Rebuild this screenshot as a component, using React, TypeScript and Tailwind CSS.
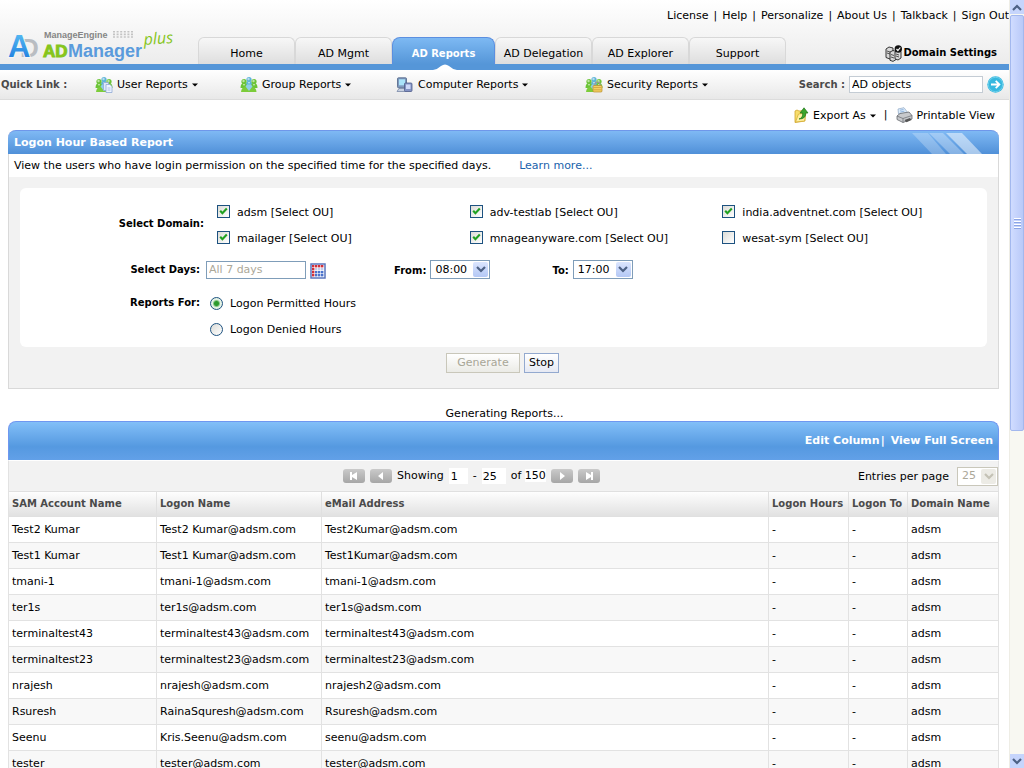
import { useId, useState, type ReactNode } from "react";

/* ── Data ── */

const topLinks = ["License", "Help", "Personalize", "About Us", "Talkback", "Sign Out"];
const tabs = ["Home", "AD Mgmt", "AD Reports", "AD Delegation", "AD Explorer", "Support"];

const domains = [
  { name: "adsm", checked: true },
  { name: "adv-testlab", checked: true },
  { name: "india.adventnet.com", checked: true },
  { name: "mailager", checked: true },
  { name: "mnageanyware.com", checked: true },
  { name: "wesat-sym", checked: false },
];

const columns = [
  { label: "SAM Account Name", width: "w-[148px]" },
  { label: "Logon Name", width: "w-[165px]" },
  { label: "eMail Address", width: "" },
  { label: "Logon Hours", width: "w-[80px]" },
  { label: "Logon To", width: "w-[59px]" },
  { label: "Domain Name", width: "w-[91px]" },
];

const rows = [
  ["Test2 Kumar", "Test2 Kumar@adsm.com", "Test2Kumar@adsm.com"],
  ["Test1 Kumar", "Test1 Kumar@adsm.com", "Test1Kumar@adsm.com"],
  ["tmani-1", "tmani-1@adsm.com", "tmani-1@adsm.com"],
  ["ter1s", "ter1s@adsm.com", "ter1s@adsm.com"],
  ["terminaltest43", "terminaltest43@adsm.com", "terminaltest43@adsm.com"],
  ["terminaltest23", "terminaltest23@adsm.com", "terminaltest23@adsm.com"],
  ["nrajesh", "nrajesh@adsm.com", "nrajesh2@adsm.com"],
  ["Rsuresh", "RainaSquresh@adsm.com", "Rsuresh@adsm.com"],
  ["Seenu", "Kris.Seenu@adsm.com", "seenu@adsm.com"],
  ["tester", "tester@adsm.com", "tester@adsm.com"],
];

/* ── Icons ── */

function Person({ x, y, color }: { x: number; y: number; color: string }) {
  return (
    <g transform={`translate(${x} ${y})`}>
      <path d="M0 9 Q0 4 3.5 4 Q7 4 7 9 Z" fill={color} />
      <path d="M2.5 4.5 L3.5 7 L4.5 4.5Z" fill="#fff" />
      <circle cx="3.5" cy="2.6" r="2.6" fill={color} />
      <circle cx="3" cy="2" r="1.2" fill="#fff" opacity="0.55" />
    </g>
  );
}

function UsersIcon({ children }: { children?: ReactNode }) {
  return (
    <svg width="18" height="16" viewBox="0 0 18 16" aria-hidden="true">
      <Person x={5.5} y={0} color="#5fb4d8" />
      <Person x={0.5} y={2} color="#6cc437" />
      <Person x={10.5} y={2} color="#6cc437" />
      <path d="M1 15 Q1.5 10 5.5 10 Q8 10 9 12 Q10 10 12.5 10 Q16 10 16.5 15Z" fill="#7ccc3a" />
      <path d="M5.5 9.5 L9 14 L12.5 9.5 L11 7.5 H7Z" fill="#8fcde8" />
      {children}
    </svg>
  );
}

function UserDocIcon() {
  return (
    <UsersIcon>
      <path d="M8.5 5.5 h5 v8 h-5z" fill="#dfe9fa" stroke="#8fa9d6" strokeWidth="0.8" />
      <path d="M11 7.5 h4 l2 2 v6 h-6z" fill="#eef4ff" stroke="#8fa9d6" strokeWidth="0.8" />
      <path d="M12.5 11 h3 M12.5 13 h3" stroke="#9db6e2" strokeWidth="0.8" />
    </UsersIcon>
  );
}

function SecurityIcon() {
  return (
    <UsersIcon>
      <path d="M10 9 V7.5 a2.5 2.5 0 0 1 5 0 V9" fill="none" stroke="#9a9a9a" strokeWidth="1.2" />
      <rect x="8" y="8.5" width="9" height="6.5" rx="1" fill="#f3cf63" stroke="#b98b2c" strokeWidth="0.7" />
      <path d="M8.5 10.5 h8 M8.5 12.8 h8" stroke="#c99a36" strokeWidth="0.7" />
    </UsersIcon>
  );
}

function ComputerIcon() {
  return (
    <svg width="18" height="16" viewBox="0 0 18 16" aria-hidden="true">
      <rect x="1.5" y="0.8" width="9" height="10" rx="1" fill="#7f98bd" stroke="#4d6387" strokeWidth="0.8" />
      <rect x="3" y="2.3" width="6" height="6" fill="#a9e3fa" />
      <path d="M1 14.5 L3 11.5 H10 V14.5Z" fill="#c9d2e2" stroke="#6b7d9f" strokeWidth="0.7" />
      <rect x="8.5" y="6" width="7.5" height="8.5" rx="1" fill="#8493c4" stroke="#4c5a88" strokeWidth="0.8" />
      <rect x="10" y="7.5" width="4.5" height="4.5" fill="#cdd8f8" />
    </svg>
  );
}

function ServerIcon() {
  return (
    <svg width="18" height="17" viewBox="0 0 18 17" aria-hidden="true">
      <g fill="#d8d8d8" stroke="#222" strokeWidth="0.9">
        <path d="M1 4 L4 2 L8 3 V12 L5 14 L1 12.5Z" />
        <path d="M5 7 L8 5.5 L11 6.5 V14.5 L8 16.4 L5 15.3Z" />
        <path d="M10 7 L13 5.5 L16 6.5 V13 L13 15 L10 13.8Z" />
      </g>
      <path d="M2 6 l3 1 M2 8 l3 1 M6 9.5 l3 1 M6 12 l3 1 M11 9 l3 1 M11 11 l3 1" stroke="#333" strokeWidth="0.8" />
      <circle cx="13.3" cy="4" r="3.7" fill="#111" />
      <path d="M11.5 4 l1.4 1.5 l2.4 -3" fill="none" stroke="#fff" strokeWidth="1.2" />
    </svg>
  );
}

function ExportIcon() {
  return (
    <svg width="15" height="16" viewBox="0 0 15 16" aria-hidden="true">
      <path d="M1 4 L3 3 L5 4 L11 3.5 V14 L1 15.5Z" fill="#f7dd6c" stroke="#cfa52c" strokeWidth="0.8" />
      <path d="M1.5 15 L4.5 7 L12 6 L10.5 14Z" fill="#fff0a2" stroke="#d3a92c" strokeWidth="0.7" />
      <path d="M5 12 Q9 11 8.7 6 L6 6 L10 0.8 L14 6 L11.7 6 Q12 12 5 12Z" fill="#3da62e" stroke="#1f7518" strokeWidth="0.7" />
    </svg>
  );
}

function PrinterIcon() {
  return (
    <svg width="17" height="17" viewBox="0 0 17 17" aria-hidden="true">
      <path d="M2.5 7 L2 2 L8 0.7 L12 6Z" fill="#dcecfb" stroke="#8fa8c4" strokeWidth="0.7" />
      <path d="M4 3.2 l3.5 -.7 M4.3 5 l4 -.8" stroke="#7da7d9" strokeWidth="0.8" />
      <path d="M1 9 L4 6.5 L13 5 L16 8.5 V12 L7 15.5 L1 12.5Z" fill="#c7c9cc" stroke="#66696e" strokeWidth="0.8" />
      <path d="M1 9 L7 11.5 L16 8.5" fill="none" stroke="#66696e" strokeWidth="0.7" />
      <path d="M7 15.5 V11.5" stroke="#66696e" strokeWidth="0.7" />
      <path d="M8.5 13 L14 11 L15.5 13 L10.5 15.3Z" fill="#555" />
    </svg>
  );
}

function GoIcon() {
  return (
    <svg width="17" height="17" viewBox="0 0 17 17" aria-hidden="true">
      <circle cx="8.5" cy="8.5" r="8.2" fill="#35b8df" />
      <circle cx="8.5" cy="8.5" r="7.2" fill="none" stroke="#7bd3ec" strokeWidth="0.8" />
      <path d="M4 8.5 H12 M8.7 4.8 L12.4 8.5 L8.7 12.2" fill="none" stroke="#fff" strokeWidth="1.8" />
    </svg>
  );
}

function CalendarIcon() {
  return (
    <svg width="16" height="16" viewBox="0 0 16 16" aria-hidden="true">
      <rect x="1" y="1" width="14" height="14" fill="#fff" stroke="#5b76bd" strokeWidth="1.5" />
      {[0, 1, 2, 3].map(r =>
        [0, 1, 2, 3].map(c => (
          <rect key={`${r}-${c}`} x={2 + c * 3} y={2 + r * 3} width="2.4" height="2.4"
            fill={r === 0 || c === 0 ? "#d0303a" : r === 1 ? "#c5cdec" : "#4a72cc"} />
        ))
      )}
    </svg>
  );
}

function Caret() {
  return (
    <svg width="6" height="4" viewBox="0 0 6 4" aria-hidden="true">
      <path d="M0 0.5 H6 L3 3.5Z" fill="#000" />
    </svg>
  );
}

function Chevron({ color }: { color: string }) {
  return (
    <svg width="10" height="7" viewBox="0 0 10 7" aria-hidden="true">
      <path d="M1 1 L5 5 L9 1" fill="none" stroke={color} strokeWidth="2.2" />
    </svg>
  );
}

function Logo() {
  return (
    <svg width="180" height="42" viewBox="0 0 180 42" role="img" aria-label="ManageEngine ADManager Plus">
      <defs>
        <linearGradient id="logoA" x1="0" y1="0" x2="0" y2="1">
          <stop offset="0" stopColor="#5fc4f5" />
          <stop offset="1" stopColor="#1674dc" />
        </linearGradient>
      </defs>
      <g fontFamily="'Liberation Sans', Arial, sans-serif" fontWeight="700">
        <text x="20" y="35" fontSize="26" fill="#b9bdc2">D</text>
        <text x="8" y="35" fontSize="31" fill="url(#logoA)" stroke="#f4f4f4" strokeWidth="2" paintOrder="stroke">A</text>
        <text x="44" y="16" fontSize="9" fill="#858585">ManageEngine</text>
        <text x="43" y="35" fontSize="17" fill="#86c51c" stroke="#86c51c" strokeWidth="1">AD</text>
        <text x="68" y="35" fontSize="18" fill="#5a9bdc">Manager</text>
      </g>
      {[0, 1, 2, 3, 4, 5].map(i => (
        <path key={i} d={`M${114 + i * 3.6} 9 v7`} stroke="#c3c3c3" strokeWidth="2" strokeDasharray="1.6 1" />
      ))}
      <text x="144" y="23" fontFamily="'Open Sans', sans-serif" fontStyle="italic" fontSize="16" fill="#86c51c"
        transform="rotate(-4 144 23)">plus</text>
    </svg>
  );
}

/* ── Controls ── */

const quickLinks = [
  { label: "User Reports", icon: <UserDocIcon /> },
  { label: "Group Reports", icon: <UsersIcon /> },
  { label: "Computer Reports", icon: <ComputerIcon /> },
  { label: "Security Reports", icon: <SecurityIcon /> },
];

function DomainCheck({ name, checked }: { name: string; checked: boolean }) {
  const id = useId();
  return (
    <div className="flex h-[26px] items-center gap-[7px]">
      <span className="relative h-[13px] w-[13px]">
        <input id={id} type="checkbox" defaultChecked={checked}
          className="peer block h-[13px] w-[13px] appearance-none border border-[#1d5280] bg-linear-to-br from-[#dcdcd7] to-white" />
        <svg viewBox="0 0 13 13" aria-hidden="true"
          className="pointer-events-none invisible absolute inset-0 peer-checked:visible">
          <path d="M3.2 5.8 L5.4 8.2 L9.8 3.6" fill="none" stroke="#21a121" strokeWidth="2.1" />
        </svg>
      </span>
      <span className="pt-[3px]">
        <label htmlFor={id}>{name}</label> <a href="#ou">[Select OU]</a>
      </span>
    </div>
  );
}

function HourSelect({ label, value }: { label: string; value: string }) {
  const id = useId();
  const hours = ["08:00", "12:00", "17:00"];
  return (
    <div className="flex items-center gap-1">
      <label htmlFor={id} className="pt-[2px] text-[10px] font-bold">{label}</label>
      <span className="relative">
        <select id={id} defaultValue={value}
          className="block h-[19px] w-[60px] appearance-none border border-[#7f9db9] bg-white pl-1 text-[11px]">
          {hours.map(h => <option key={h}>{h}</option>)}
        </select>
        <span className="pointer-events-none absolute top-[2px] right-[2px] flex h-[15px] w-[15px] items-center justify-center rounded-[2px] bg-linear-to-b from-[#dbe5fe] to-[#b4c8f5]">
          <Chevron color="#4d6185" />
        </span>
      </span>
    </div>
  );
}

function PagerButton({ label, path }: { label: string; path: string }) {
  return (
    <button aria-label={label} className="flex h-[14px] w-[22px] items-center justify-center rounded-[3px] bg-linear-to-b from-[#cacaca] to-[#a6a6a6]">
      <svg width="10" height="8" viewBox="0 0 10 8" aria-hidden="true">
        <path d={path} fill="#fff" />
      </svg>
    </button>
  );
}

/* ── Page sections ── */

function Header() {
  return (
    <header className="grid grid-cols-[198px_1fr] grid-rows-[37px_27px] border-b-6 border-[#5596d8] bg-linear-to-b from-white to-[#ececec]">
      <a href="#home" className="row-span-2 self-end">
        <Logo />
      </a>
      <div className="flex items-center justify-end pb-[6px]">
        {topLinks.map((l, i) => (
          <span key={l}>
            {i > 0 && <span className="px-[5px]">|</span>}
            <a href="#top">{l}</a>
          </span>
        ))}
      </div>
      <div className="flex">
        <nav className="flex">
          {tabs.map(t =>
            t === "AD Reports" ? (
              <a key={t} href="#tab" className="relative flex w-[103px] items-center justify-center rounded-t-lg border border-b-0 border-[#5b8fe0] bg-linear-to-b from-[#7db9f3] to-[#5596d8] pt-[5px] text-[10px] font-bold text-white">
                {t}
                <svg width="24" height="6" viewBox="0 0 24 6" aria-hidden="true" className="absolute top-full left-10">
                  <path d="M0 6 Q5 5 8 2 Q12 -1 16 2 Q19 5 24 6Z" fill="#fff" />
                </svg>
              </a>
            ) : (
              <a key={t} href="#tab" className="flex w-[97px] items-center justify-center rounded-t-md border border-b-0 border-[#d8d8d8] bg-linear-to-b from-[#f7f7f7] to-[#dedede] pt-[5px]">
                {t}
              </a>
            )
          )}
        </nav>
        <a href="#domain" className="ml-auto flex items-center pt-[5px] pr-3 text-[10px] font-bold">
          <ServerIcon />
          Domain Settings
        </a>
      </div>
    </header>
  );
}

function QuickBar() {
  return (
    <div className="grid h-[30px] grid-cols-[95px_145px_156px_189px_1fr_auto] items-center border-b border-[#dcdcdc] bg-linear-to-b from-white to-[#e8e8e8]">
      <span className="pl-px text-[10px] font-bold text-[#4a4a4a]">Quick Link :</span>
      {quickLinks.map(q => (
        <button key={q.label} className="flex items-center gap-1 whitespace-nowrap text-left">
          {q.icon}
          {q.label}
          <Caret />
        </button>
      ))}
      <div className="flex items-center gap-1 pr-[5px]">
        <label htmlFor="search" className="text-[10px] font-bold text-[#4a4a4a]">Search :</label>
        <input id="search" defaultValue="AD objects" className="h-[17px] w-[134px] border border-[#c4ccd4] bg-white pl-[2px]" />
        <button aria-label="Go"><GoIcon /></button>
      </div>
    </div>
  );
}

function FilterPanel() {
  const [mode, setMode] = useState("Logon Permitted Hours");
  return (
    <section className="mr-[10px] ml-2 rounded-t-lg border border-[#d9d9d9] border-t-0 bg-[#f2f2f2]">
      <div className="-mx-px flex h-6 items-center justify-between overflow-hidden rounded-t-lg border-t border-[#6f97ea] bg-linear-to-b from-[#7fb9f4] to-[#5090d8] pl-[6px]">
        <h1 className="text-[11px] font-bold text-white">Logon Hour Based Report</h1>
        <svg width="90" height="22" viewBox="0 0 90 22" aria-hidden="true">
          <path d="M3 1 H19 L37 22 H23Z" fill="#fff" opacity="0.25" />
          <path d="M20 1 H34 L55 22 H41Z" fill="#fff" opacity="0.3" />
          <path d="M37 1 H53 L73 22 H58Z" fill="#fff" opacity="0.5" />
        </svg>
      </div>
      <p className="flex h-[23px] items-center gap-7 bg-white pt-px pl-[5px]">
        View the users who have login permission on the specified time for the specified days.
        <a href="#learn" className="text-[#1a62ac]">Learn more...</a>
      </p>
      <form onSubmit={e => e.preventDefault()}>
        <div className="mx-[11px] mt-[11px] grid grid-cols-[186px_1fr] items-center rounded-md bg-white pt-[10px] pb-px">
          <span className="pr-[2px] text-right text-[10px] font-bold">Select Domain:</span>
          <div className="grid grid-cols-3 pr-3 pl-[11px]">
            {domains.map(d => <DomainCheck key={d.name} {...d} />)}
          </div>

          <label htmlFor="days" className="pr-[6px] text-right text-[10px] font-bold">Select Days:</label>
          <div className="flex h-10 items-center pb-px">
            <input id="days" defaultValue="All 7 days" className="h-[18px] w-[100px] border border-[#7f9db9] bg-white pl-[2px] text-[#aca899]" />
            <button type="button" aria-label="Choose days" className="ml-1 pt-[3px]"><CalendarIcon /></button>
            <div className="flex gap-[62px] pl-[68px]">
              <HourSelect label="From:" value="08:00" />
              <HourSelect label="To:" value="17:00" />
            </div>
          </div>

          <span className="self-start pt-[6px] pr-[6px] text-right text-[10px] font-bold">Reports For:</span>
          <div className="pb-1 pl-1">
            {["Logon Permitted Hours", "Logon Denied Hours"].map(m => (
              <label key={m} className="flex h-[26px] items-center gap-[7px]">
                <input type="radio" name="mode" checked={mode === m} onChange={() => setMode(m)}
                  className="h-[13px] w-[13px] appearance-none rounded-full border border-[#1d5280] bg-linear-to-br from-[#dcdcd7] to-white checked:bg-[radial-gradient(#2c9a2c_0_2px,#e4f2e4_4px)]" />
                <span className="pt-[2px]">{m}</span>
              </label>
            ))}
          </div>
        </div>
        <div className="flex justify-center gap-1 pt-[6px] pr-[2px] pb-[15px]">
          <button disabled className="h-5 w-[74px] border border-[#c9c7ba] bg-linear-to-b from-white to-[#ebebe6] text-[#a8a696]">Generate</button>
          <button className="h-5 w-[35px] border border-[#93a9cf] bg-linear-to-b from-white to-[#e6e9f3]">Stop</button>
        </div>
      </form>
    </section>
  );
}

function ResultsPanel() {
  return (
    <section className="mr-[10px] ml-2">
      <div className="flex h-[39px] items-center justify-end rounded-t-lg border border-b-0 border-[#6f97f0] bg-linear-to-b from-[#82bff8] via-[#5599e0] via-65% to-[#62a0e8] pr-[5px] text-[11px] font-bold text-white">
        <a href="#edit">Edit Column</a><span className="pr-[6px] pl-px">|</span><a href="#full">View Full Screen</a>
      </div>
      <div className="flex h-[31px] items-center border-x border-t border-[#e2e2e2] border-t-white bg-[#f2f2f2] pl-[334px]">
        <div className="flex items-center gap-[5px]">
          <PagerButton label="First page" path="M1 0h2v3L8 0v8L3 5v3H1Z" />
          <PagerButton label="Previous page" path="M7 0v8L2 4Z" />
          <label htmlFor="start">Showing</label>
          <input id="start" defaultValue="1" className="h-4 w-[19px] bg-white pl-[2px]" />
          <span>-</span>
          <input aria-label="Last entry" defaultValue="25" className="h-4 w-6 bg-white pl-px" />
          <span>of <span className="bg-white">150</span></span>
          <PagerButton label="Next page" path="M3 0v8L8 4Z" />
          <PagerButton label="Last page" path="M2 0v8L7 5v3h2V0H7v3Z" />
        </div>
        <div className="ml-auto flex items-center gap-2">
          <label htmlFor="perPage" className="pt-[2px]">Entries per page</label>
          <span className="relative">
            <select id="perPage" disabled className="block h-[19px] w-[41px] appearance-none border border-[#c9c7ba] bg-white pl-1 text-[#aca899] opacity-100">
              <option>25</option>
            </select>
            <span className="pointer-events-none absolute top-[2px] right-[2px] flex h-[15px] w-[15px] items-center justify-center rounded-[2px] bg-[#ecebe5]">
              <Chevron color="#c4c2b5" />
            </span>
          </span>
        </div>
      </div>
      <table className="w-full table-fixed border-separate border-spacing-0 border-l border-[#e2e2e2]">
        <thead>
          <tr className="h-[26px] bg-linear-to-b from-white to-[#e0e0e0] text-left text-[10px] text-[#4a4a4a]">
            {columns.map(c => (
              <th key={c.label} className={`${c.width} border-t border-r border-b border-[#e0e0e0] pl-[3px] font-bold whitespace-nowrap`}>{c.label}</th>
            ))}
          </tr>
        </thead>
        <tbody>
          {rows.map(r => (
            <tr key={r[0]} className="h-[26px] even:bg-[#f8f8f8]">
              {[...r, "-", "-", "adsm"].map((cell, i) => (
                <td key={i} className="border-r border-b border-[#e2e2e2] pl-[3px] whitespace-nowrap">{cell}</td>
              ))}
            </tr>
          ))}
        </tbody>
      </table>
    </section>
  );
}

function ScrollBar() {
  return (
    <div aria-hidden="true" className="flex w-[15px] shrink-0 flex-col border-l border-[#eeede5] bg-[#f8f8f2]">
      <div className="flex h-[14px] items-center justify-center bg-[#c6d5fc]">
        <span className="rotate-180"><Chevron color="#4d6185" /></span>
      </div>
      <div className="mt-px flex h-[416px] flex-col items-center justify-center gap-px rounded-[2px] border border-[#a3b8ee] bg-linear-to-r from-[#d0dcff] to-[#b9c9f8]">
        {[0, 1, 2, 3].map(i => <span key={i} className="h-[2px] w-[7px] border-b border-[#8ca5e6] bg-white" />)}
      </div>
      <div className="mt-auto flex h-[14px] items-center justify-center bg-[#c6d5fc]">
        <Chevron color="#4d6185" />
      </div>
    </div>
  );
}

export default function App() {
  return (
    <div className="flex h-screen overflow-hidden bg-white font-['DejaVu_Sans',Verdana,sans-serif] text-[11px] leading-[14px] text-black">
      <main className="min-w-0 flex-1">
        <Header />
        <QuickBar />
        <div className="flex h-[30px] items-center justify-end gap-1 pr-[14px]">
          <ExportIcon />
          <button className="flex items-center gap-1 pt-[2px]">Export As <Caret /></button>
          <span className="px-1">|</span>
          <PrinterIcon />
          <a href="#print" className="pt-[2px]">Printable View</a>
        </div>
        <FilterPanel />
        <p className="pt-[18px] text-center">Generating Reports...</p>
        <ResultsPanel />
      </main>
      <ScrollBar />
    </div>
  );
}
